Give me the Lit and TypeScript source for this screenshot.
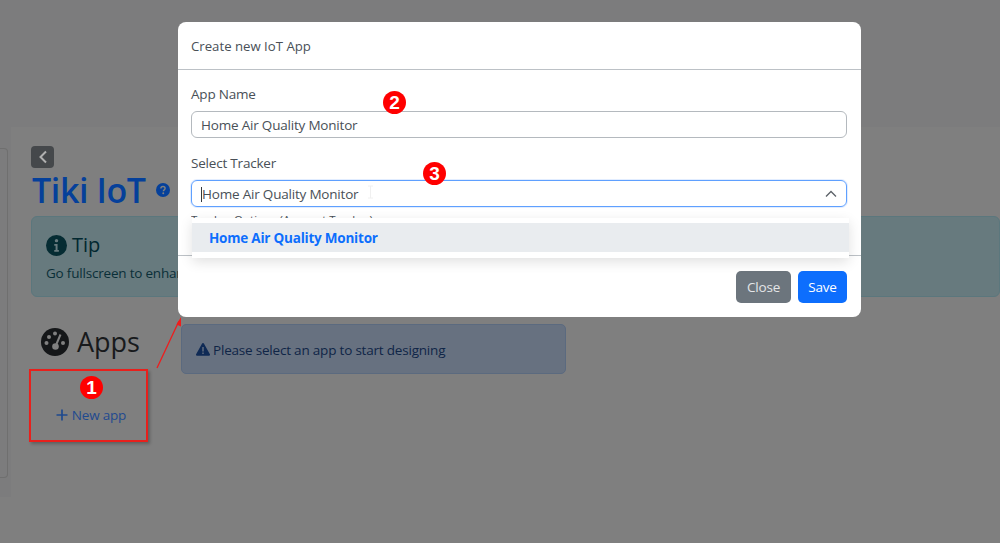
import { LitElement, html, css, svg } from "lit";
import { customElement } from "lit/decorators.js";

const badge = (n: string, cls: string) => html`<span class="badge ${cls}">${n}</span>`;

@customElement("app-root")
export class AppRoot extends LitElement {
  static styles = css`
    :host { display: block; width: 1000px; height: 543px; overflow: hidden; position: relative; font-family: "Open Sans", "Noto Sans", sans-serif; background: #7c7c7d; color: #212529; letter-spacing: -0.2px; }
    * { box-sizing: border-box; }
    .page { height: 543px; padding-top: 127px; }
    .body { height: 416px; background: #7f7f7f; display: flex; }
    .side-wrap { width: 11px; height: 370px; padding-top: 21px; background: #7c7c7d; flex: none; }
    .side { width: 8px; height: 330px; border: 1px solid #6f6f6f; border-left: 0; border-radius: 0 4px 4px 0; }
    .main { margin-left: 20px; width: 969px; padding-top: 19px; position: relative; }
    .back { width: 23px; height: 22px; background: #45484b; border-radius: 4px; display: flex; align-items: center; justify-content: center; }
    h1 { margin: 0; font-size: 34px; line-height: 44px; font-weight: 600; color: #05409a; display: flex; align-items: center; gap: 10px; height: 44px; letter-spacing: -0.4px; padding-left: 1px; }
    .tip { margin-top: 4px; height: 81px; background: #677a7e; border: 1px solid #5b777d; border-radius: 6px; padding: 13px 14px; color: #022830; }
    .tip h4 { margin: 0; font-size: 20px; line-height: 30px; font-weight: 500; display: flex; align-items: center; gap: 5px; letter-spacing: 0; }
    .tip p { margin: 0; font-size: 13.5px; line-height: 26px; color: #0a2f38; white-space: nowrap; }
    .row { display: flex; margin-top: 27px; }
    .apps { width: 150px; }
    .apps h3 { margin: -1px 0 0 10px; font-size: 27px; line-height: 38px; font-weight: 500; color: #181a1c; display: flex; align-items: center; gap: 8px; letter-spacing: 0; }
    .new { width: 120px; height: 72px; margin-top: 6px; display: flex; align-items: center; justify-content: center; padding: 23px 0 0 0; color: #1f4a8f; font-size: 13.5px; gap: 4px; }
    .warn { width: 385px; height: 50px; background: #677180; border: 1px solid #5b6a7f; border-radius: 5px; display: flex; align-items: center; padding: 1px 14px 0; font-size: 13.5px; color: #0f2547; gap: 3px; }
    .modal { position: absolute; left: 178px; top: 22px; width: 683px; height: 295px; background: #fff; border-radius: 8px; display: flex; flex-direction: column; }
    .m-head { height: 48px; border-bottom: 1px solid #bcc1c6; padding: 0 13px; display: flex; align-items: center; font-size: 13.2px; color: #495057; letter-spacing: 0; }
    .m-body { flex: 1; padding: 13px 14px 0 13px; border-bottom: 1px solid #bcc1c6; }
    label { display: block; font-size: 13.5px; line-height: 22px; color: #495057; }
    .input { height: 27px; margin-top: 6px; border: 1px solid #b4b9be; border-radius: 6px; display: flex; align-items: center; padding: 1px 9px 0; font-size: 13.5px; color: #495057; }
    .gap { margin-top: 14px; }
    .input.sel { margin-top: 6px; border-color: #5fa0ff; box-shadow: 0 0 0 1px rgba(13,110,253,.12); position: relative; justify-content: space-between; }
    .caret { border-left: 1px solid #33383d; height: 15px; }
    .sel .txt { display: flex; align-items: center; }
    .ibeam { position: absolute; left: 175px; top: 4px; }
    .m-foot { height: 61px; display: flex; justify-content: flex-end; align-items: center; gap: 7px; padding-right: 14px; }
    .btn { height: 32px; border-radius: 5px; display: flex; align-items: center; justify-content: center; font-size: 13.5px; color: #fff; }
    .close { width: 55px; background: #6c757d; color: #e4e6e8; }
    .save { width: 49px; background: #0d6efd; }
    .cut { position: absolute; left: 13px; top: 191px; font-size: 11.5px; line-height: 13px; height: 5px; overflow: hidden; color: #495057; white-space: nowrap; letter-spacing: 0; }
    .menu { position: absolute; left: 14px; top: 196px; width: 657px; height: 40px; background: #fff; padding: 5px 0; box-shadow: 0 4px 12px rgba(0,0,0,.12); }
    .opt { height: 29px; background: #e9ecef; color: #0d6efd; font-size: 13.5px; font-weight: 700; display: flex; align-items: center; padding-left: 17px; letter-spacing: -0.22px; }
    .badge { position: absolute; width: 23px; height: 23px; border-radius: 50%; background: #f00; color: #fff; font-family: "Liberation Sans", sans-serif; font-weight: 700; font-size: 19px; letter-spacing: 0; display: flex; align-items: center; justify-content: center; }
    .b1 { left: 80px; top: 376px; } .b2 { left: 383px; top: 91px; } .b3 { left: 423px; top: 162px; }
    .redbox { position: absolute; left: 29px; top: 369px; width: 119px; height: 73px; border: 2px solid #e8201c; box-shadow: 2px 2px 3px rgba(0,0,0,.25); }
    .arrow { position: absolute; left: 150px; top: 310px; }
  `;

  render() {
    return html`
      <div class="page">
        <div class="body">
          <div class="side-wrap"><div class="side"></div></div>
          <div class="main">
            <div class="back"><svg width="10" height="14" viewBox="0 0 10 14"><path d="M8 1.500 2.500 7 8 12.500" fill="none" stroke="#b0b0b0" stroke-width="2"/></svg></div>
            <h1>Tiki IoT
              <svg width="14" height="14" viewBox="0 0 16 16"><circle cx="8" cy="8" r="8" fill="#05409a"/><path d="M5.600 6.200C5.600 4.800 6.700 4 8 4s2.400.8 2.400 2.100c0 1.900-2 1.700-2 3.300" fill="none" stroke="#808080" stroke-width="1.600"/><circle cx="8.300" cy="11.800" r="1.100" fill="#808080"/></svg>
            </h1>
            <div class="tip">
              <h4><svg width="21" height="21" viewBox="0 0 16 16"><circle cx="8" cy="8" r="8" fill="#052c33"/><circle cx="8" cy="4.300" r="1.300" fill="#677a7e"/><path d="M6.300 6.800h2.500v4.600h1v1.300H6.300v-1.300h1V8.100h-1z" fill="#677a7e"/></svg>Tip</h4>
              <p>Go fullscreen to enhance your experience</p>
            </div>
            <div class="row">
              <div class="apps">
                <h3><svg width="28" height="28" viewBox="0 0 28 28"><circle cx="14" cy="14" r="14" fill="#151719"/><circle cx="8" cy="9" r="2" fill="#808080"/><circle cx="14" cy="5.500" r="2" fill="#808080"/><circle cx="5.500" cy="15" r="2" fill="#808080"/><circle cx="22" cy="15" r="2" fill="#808080"/><path d="M19.500 6.500 15.500 16" stroke="#808080" stroke-width="2"/><circle cx="14.500" cy="18.500" r="3.300" fill="#808080"/></svg>Apps</h3>
                <div class="new"><svg width="12" height="12" viewBox="0 0 12 12"><path d="M6 .5v11M.5 6h11" stroke="#1f4a8f" stroke-width="1.700"/></svg>New app</div>
              </div>
              <div class="warn"><svg width="14" height="13" viewBox="0 0 14 13"><path d="M7 0a1 1 0 0 1 .9.5l6 10.800a1 1 0 0 1-.9 1.500H1a1 1 0 0 1-.9-1.500L6.100.500A1 1 0 0 1 7 0z" fill="#0f2a55"/><path d="M6.300 4h1.400v4.500H6.300zM6.300 9.500h1.400v1.500H6.300z" fill="#677180"/></svg>Please select an app to start designing</div>
            </div>
          </div>
        </div>
      </div>
      <div class="redbox"></div>
      <svg class="arrow" width="40" height="70" viewBox="0 0 40 70">${svg`<path d="M7 58 29 11" stroke="#ef1c1c" stroke-width="1.300"/><path d="M31 7 26.500 14.500 31 16.500z" fill="#ef1c1c"/>`}</svg>
      <div class="modal">
        <div class="m-head">Create new IoT App</div>
        <div class="m-body">
          <label>App Name</label>
          <div class="input">Home Air Quality Monitor</div>
          <label class="gap">Select Tracker</label>
          <div class="input sel"><span class="txt"><span class="caret"></span>Home Air Quality Monitor</span>
            <svg class="ibeam" width="7" height="14" viewBox="0 0 7 14"><path d="M1 1h5M3.500 1v12M1 13h5" fill="none" stroke="#f0f0f0"/></svg>
            <svg width="12" height="8" viewBox="0 0 12 8"><path d="M1 6.500 6 1.500l5 5" fill="none" stroke="#5c6268" stroke-width="1.300"/></svg></div>
        </div>
        <div class="m-foot"><div class="btn close">Close</div><div class="btn save">Save</div></div>
        <div class="cut">Tracker Options (Account Tracker)</div>
        <div class="menu"><div class="opt">Home Air Quality Monitor</div></div>
      </div>
      ${badge("1", "b1")}${badge("2", "b2")}${badge("3", "b3")}
    `;
  }
}
